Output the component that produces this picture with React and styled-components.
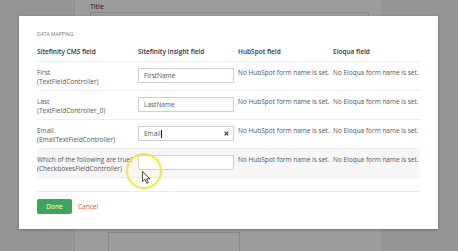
import React from 'react';
import styled, { createGlobalStyle } from 'styled-components';

const GlobalStyle = createGlobalStyle`
  html, body {
    margin: 0;
    padding: 0;
    width: 458px;
    height: 251px;
    overflow: hidden;
    font-family: "Open Sans", "Liberation Sans", sans-serif;
  }
`;

const Page = styled.div`
  position: relative;
  width: 458px;
  height: 251px;
  display: grid;
  grid-template-columns: 75px 308px 1fr;
  background: #fafafa;
  overflow: hidden;
`;

const Sidebar = styled.div`
  background: #f4f4f4;
  border-right: 1px solid #ececec;
`;

const Main = styled.div`
  background: #ffffff;
  border-right: 1px solid #e6e6e6;
  padding: 2px 0 0 15px;
  display: flex;
  flex-direction: column;
`;

const Label = styled.div`
  font-size: 7px;
  line-height: 9px;
  color: #333;
`;

const TitleInput = styled.div`
  width: 277px;
  height: 18px;
  border: 1px solid #dcdcdc;
  margin-top: 1px;
  position: relative;
  &::after {
    content: '';
    position: absolute;
    right: 8px;
    top: 4px;
    width: 5px;
    height: 2px;
    background: #555;
  }
`;

const LowerBox = styled.div`
  margin: auto 0 0 18px;
  width: 130px;
  height: 20px;
  border: 1px solid #e0e0e0;
  border-bottom: none;
  margin-bottom: -2px;
`;

const RightPane = styled.div`
  background: #f6f6f6;
`;

const Overlay = styled.div`
  position: absolute;
  inset: 0;
  background: rgba(0, 0, 0, 0.39);
`;

const Modal = styled.div`
  position: absolute;
  left: 19px;
  top: 16px;
  width: 419px;
  height: 213px;
  box-sizing: border-box;
  background: #fff;
  box-shadow: 0 1px 3px rgba(0, 0, 0, 0.25);
  padding: 14px 18px 15px;
  display: flex;
  flex-direction: column;
`;

const SectionTitle = styled.div`
  font-size: 5px;
  line-height: 8px;
  color: #777;
  text-transform: uppercase;
  margin-bottom: 5px;
`;

const Row = styled.div`
  display: grid;
  grid-template-columns: 101px 100px 95px 1fr;
  align-items: start;
  padding: ${p => (p.$head ? '4px 0 5px' : '6px 0 4px')};
  border-bottom: 1px solid #ededed;
  background: ${p => (p.$shaded ? '#f7f7f7' : 'transparent')};
  min-height: ${p => (p.$head ? '9px' : '18px')};
`;

const HeadCell = styled.div`
  font-size: 6.5px;
  line-height: 9px;
  font-weight: 600;
  color: #333;
`;

const Cell = styled.div`
  font-size: 6.5px;
  line-height: 9px;
  color: #555;
  white-space: nowrap;
`;

const Field = styled.div`
  position: relative;
  width: 96px;
  height: 15px;
  box-sizing: border-box;
  border: 1px solid #cfcfcf;
  background: #fff;
  padding: 0 4px 0 5px;
  display: flex;
  align-items: center;
  font-size: 6.5px;
  color: #555;
`;

const Caret = styled.span`
  display: inline-block;
  width: 1px;
  height: 8px;
  background: #222;
  margin-left: 0.5px;
`;

const Clear = styled.svg`
  margin-left: auto;
  display: block;
`;

const Spacer = styled.div`
  height: 16px;
  border-bottom: 1px solid #ebebeb;
`;

const Footer = styled.div`
  display: flex;
  align-items: center;
  gap: 6px;
  padding-top: 7px;
`;

const DoneButton = styled.button`
  width: 35px;
  height: 15px;
  border: none;
  border-radius: 2px;
  background: #3da558;
  color: #fff;
  font-family: inherit;
  font-size: 6.5px;
  padding: 0;
`;

const CancelLink = styled.span`
  font-size: 6.5px;
  color: #c45a44;
`;

const Highlight = styled.div`
  position: absolute;
  left: 126px;
  top: 153px;
  width: 36px;
  height: 36px;
  box-sizing: border-box;
  border-radius: 50%;
  border: 2px solid #f1e94a;
  background: rgba(255, 250, 190, 0.12);
`;

const Pointer = styled.svg`
  position: absolute;
  left: 142px;
  top: 171px;
`;

const rows = [
  { name: 'First', type: '(TextFieldController)', value: 'FirstName' },
  { name: 'Last', type: '(TextFieldController_0)', value: 'LastName' },
  { name: 'Email', type: '(EmailTextFieldController)', value: 'Email', active: true },
  { name: 'Which of the following are true?', type: '(CheckboxesFieldController)', value: '', shaded: true },
];

export default function App() {
  return (
    <>
      <GlobalStyle />
      <Page>
        <Sidebar />
        <Main>
          <Label>Title</Label>
          <TitleInput />
          <LowerBox />
        </Main>
        <RightPane />
        <Overlay />
        <Modal>
          <SectionTitle>Data mapping</SectionTitle>
          <Row $head>
            <HeadCell>Sitefinity CMS field</HeadCell>
            <HeadCell>Sitefinity Insight field</HeadCell>
            <HeadCell>HubSpot field</HeadCell>
            <HeadCell>Eloqua field</HeadCell>
          </Row>
          {rows.map(r => (
            <Row key={r.type} $shaded={r.shaded}>
              <Cell>
                {r.name}
                <br />
                {r.type}
              </Cell>
              <Field>
                {r.value}
                {r.active && <Caret />}
                {r.active && (
                  <Clear width="5" height="5" viewBox="0 0 5 5">
                    <path d="M0.7 0.7 L4.3 4.3 M4.3 0.7 L0.7 4.3" stroke="#333" strokeWidth="1.1" />
                  </Clear>
                )}
              </Field>
              <Cell>No HubSpot form name is set.</Cell>
              <Cell>No Eloqua form name is set.</Cell>
            </Row>
          ))}
          <Spacer />
          <Footer>
            <DoneButton>Done</DoneButton>
            <CancelLink>Cancel</CancelLink>
          </Footer>
        </Modal>
        <Highlight />
        <Pointer width="9" height="13" viewBox="0 0 9 13">
          <path d="M0.5 0.5 L0.5 10.5 L3 8.3 L4.8 12.3 L6.3 11.6 L4.6 7.8 L8 7.8 Z" fill="#fff" stroke="#222" strokeWidth="0.8" strokeLinejoin="round" />
        </Pointer>
      </Page>
    </>
  );
}
